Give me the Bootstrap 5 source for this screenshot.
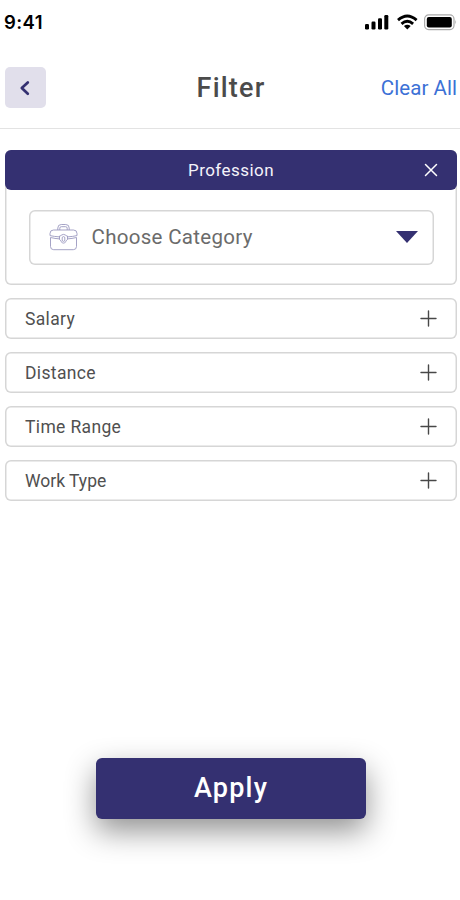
<!DOCTYPE html>
<html lang="en">
<head>
<meta charset="utf-8">
<meta name="viewport" content="width=device-width, initial-scale=1">
<title>Filter</title>
<link href="https://cdn.jsdelivr.net/npm/bootstrap@5.3.0/dist/css/bootstrap.min.css" rel="stylesheet">
<style>
  body { font-family: Roboto, "Liberation Sans", sans-serif; color: #4d4d4d; background: #fff; }
  svg { display: block; flex: none; }
  .screen { width: 460px; height: 900px; overflow: hidden; }
  .status { height: 46px; padding: 0 3px 0 4px; font-family: Inter, sans-serif; font-size: 18.5px; font-weight: 600; letter-spacing: .4px; color: #000; }
  .status svg { margin-bottom: 3px; }
  .topbar { height: 83px; padding: 2px 3px 1px 5px; border-bottom: 1px solid #e3e3e3; }
  .topbar > * { flex: 1 1 0; }
  .back { width: 40.5px; height: 41px; padding: 0 1px 0 0; border: 0; border-radius: 5px; background: #e1dfeb; }
  .title { font-size: 27px; font-weight: 500; letter-spacing: 1.2px; color: #4b4b4b; line-height: 1; padding-top: 2px; }
  .clear { display: block; font-size: 20.5px; color: #3c71d6; letter-spacing: .05px; line-height: 1; padding-top: 1px; }
  .filters { padding: 21px 3px 0 5px; gap: 13px; }
  .panel { height: 135px; border: 0; border-radius: 6px; box-shadow: inset 0 0 0 1.5px #d6d6d6; background: #fff; }
  .panel-top { height: 40px; border-radius: 6px; background: #343071; color: #f4f3fa; font-size: 17px; letter-spacing: .45px; padding: 0 19px; }
  .panel-top > * { flex: 1 1 0; }
  .panel-name { padding-top: 1px; }
  .choice { height: 54.5px; margin: 20px 23px 0 24px; border-radius: 6px; box-shadow: inset 0 0 0 1.5px #d6d6d6; padding: 0 16px 0 20px; font-size: 20.5px; color: #6b6b6b; letter-spacing: .3px; background: #fff; border: 0; }
  .choice-label { padding-left: 13.500px; }
  .filter-row { height: 41px; border: 0; border-radius: 6px; box-shadow: inset 0 0 0 1.5px #d6d6d6; background: #fff; padding: 0 20px; font-size: 17.5px; color: #505050; letter-spacing: .35px; }
  .filter-row span { padding-top: 1px; }
  .filter-row:last-child span { letter-spacing: 0; }
  .apply { width: 270px; height: 61px; margin: 257px 0 0 96px; padding: 0; border: 0; border-radius: 6px; background: #343071; color: #fff; font-size: 27px; font-weight: 500; letter-spacing: 1.2px; box-shadow: 0 12px 30px rgba(0,0,0,.43); }
</style>
</head>
<body>
<main class="screen d-flex flex-column">
  <div class="status d-flex align-items-center justify-content-between">
    <span>9:41</span>
    <svg width="93" height="22" viewBox="0 0 93 22">
      <rect x="1" y="13" width="4" height="5.5" rx="1.2"/><rect x="7.5" y="10.5" width="4" height="8" rx="1.2"/><rect x="14" y="7.3" width="4" height="11.2" rx="1.2"/><rect x="20.3" y="4" width="4" height="14.5" rx="1.2"/>
      <g fill="none" stroke="#000" stroke-width="2.8"><path d="M34 9.1Q43.200 .8 52.600 9.100"/><path d="M37.500 12.900Q43.300 7.700 49.100 12.900"/></g>
      <path d="M39.900 15.100Q43.300 12.500 46.700 15.100L43.300 18.500Z"/>
      <rect x="60.600" y="3.900" width="29.400" height="14.700" rx="4" fill="#fff" stroke="#aaa" stroke-width="1.200"/>
      <rect x="62.800" y="6" width="25" height="10.500" rx="2"/>
      <path d="M91.300 8.800q1.700 2.200 0 4.600z" fill="#aaa"/>
    </svg>
  </div>

  <header class="topbar d-flex align-items-center">
    <div><button class="back btn d-flex align-items-center justify-content-center" aria-label="Back">
      <svg width="14" height="20" viewBox="0 0 14 20"><path d="M9.800 4.400L3.800 10l6 5.800" fill="none" stroke="#343071" stroke-width="2.700" stroke-linecap="round" stroke-linejoin="round"/></svg>
    </button></div>
    <h1 class="title m-0 text-center">Filter</h1>
    <div class="text-end"><a href="#" class="clear text-decoration-none text-nowrap">Clear All</a></div>
  </header>

  <section class="filters d-flex flex-column">
    <div class="panel">
      <div class="panel-top d-flex align-items-center">
        <span></span>
        <span class="panel-name text-center">Profession</span>
        <span class="d-flex justify-content-end"><svg width="14" height="14" viewBox="0 0 14 14"><path d="M1.500 1.500l11 11m0-11l-11 11" stroke="#fff" stroke-width="1.500" stroke-linecap="round"/></svg></span>
      </div>
      <div class="choice d-flex align-items-center">
        <svg width="29" height="28" viewBox="0 0 29 28" fill="none" stroke="#9b99c0" stroke-width=".9">
          <path d="M8.800 7V5q0-3.500 3.500-3.500h4.400q3.500 0 3.500 3.500v2M10.800 7V5.200q0-1.500 1.500-1.500h4.400q1.500 0 1.500 1.500V7"/>
          <path d="M10.500 13.900Q5 13.500 1 12.600V10.500Q1 7 4.500 7h20Q28 7 28 10.500v2.100q-4 .9-9.500 1.300"/>
          <path d="M1.500 14.500V23.500q0 3.200 3.200 3.200h19.600q3.200 0 3.200-3.200V14.500Q23 15.600 18.500 15.900M1.500 14.500Q6 15.600 10.500 15.900"/>
          <path d="M10.500 13q1.800-.1 2.300-1.100 1.700-1 3.400 0 .5 1 2.300 1.100v3.500q-1.200.5-1.500 2-2.500 3.200-5 0-.3-1.500-1.500-2z"/>
          <rect x="13.200" y="13.600" width="2.600" height="4.800" rx="1.300"/>
        </svg>
        <span class="flex-grow-1 choice-label">Choose Category</span>
        <svg width="22" height="12" viewBox="0 0 22 12"><path d="M0 0h22L11 12z" fill="#343071"/></svg>
      </div>
    </div>
    <div class="filter-row d-flex align-items-center justify-content-between"><span>Salary</span><svg width="17" height="17" viewBox="0 0 17 17"><path d="M1 8.500h15M8.500 1v15" stroke="#484848" stroke-width="1.400" stroke-linecap="round"/></svg></div>
    <div class="filter-row d-flex align-items-center justify-content-between"><span>Distance</span><svg width="17" height="17" viewBox="0 0 17 17"><path d="M1 8.500h15M8.500 1v15" stroke="#484848" stroke-width="1.400" stroke-linecap="round"/></svg></div>
    <div class="filter-row d-flex align-items-center justify-content-between"><span>Time Range</span><svg width="17" height="17" viewBox="0 0 17 17"><path d="M1 8.500h15M8.500 1v15" stroke="#484848" stroke-width="1.400" stroke-linecap="round"/></svg></div>
    <div class="filter-row d-flex align-items-center justify-content-between"><span>Work Type</span><svg width="17" height="17" viewBox="0 0 17 17"><path d="M1 8.500h15M8.500 1v15" stroke="#484848" stroke-width="1.400" stroke-linecap="round"/></svg></div>
  </section>

  <button class="apply btn">Apply</button>
</main>
<script src="https://cdn.jsdelivr.net/npm/bootstrap@5.3.0/dist/js/bootstrap.bundle.min.js"></script>
</body>
</html>
